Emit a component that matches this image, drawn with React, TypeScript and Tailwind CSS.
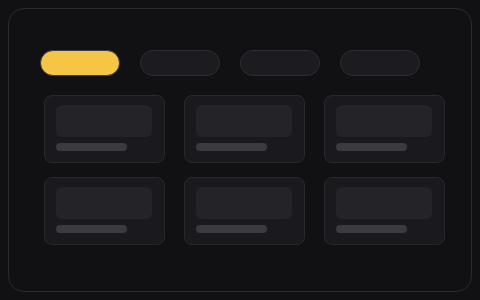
export default function App() {
  const pills = [true, false, false, false];
  const cards = [0, 1, 2, 3, 4, 5];

  return (
    <div className="h-[300px] w-[480px] bg-[#111113] p-2">
      <div className="flex h-full flex-col rounded-2xl border border-[#2a2a2f] bg-[#111113]">
        <div className="flex gap-5 pl-[31px] pt-[41px]">
          {pills.map((active, i) => (
            <div
              key={i}
              className={`h-[26px] w-20 rounded-full border ${
                active
                  ? "border-[#3a3a40] bg-[#f5c645]"
                  : "border-[#2c2c32] bg-[#1c1c20]"
              }`}
            />
          ))}
        </div>
        <div className="mt-[19px] grid grid-cols-[repeat(3,121px)] gap-x-[19px] gap-y-[14px] pl-[35px]">
          {cards.map((c) => (
            <div
              key={c}
              className="flex h-[68px] flex-col rounded-lg border border-[#28282d] bg-[#1a1a1e] px-[11px] pt-[9px]"
            >
              <div className="h-8 w-24 rounded-md bg-[#232328]" />
              <div className="mt-[6px] h-2 w-[71px] rounded-full bg-[#3a3a40]" />
            </div>
          ))}
        </div>
      </div>
    </div>
  );
}
